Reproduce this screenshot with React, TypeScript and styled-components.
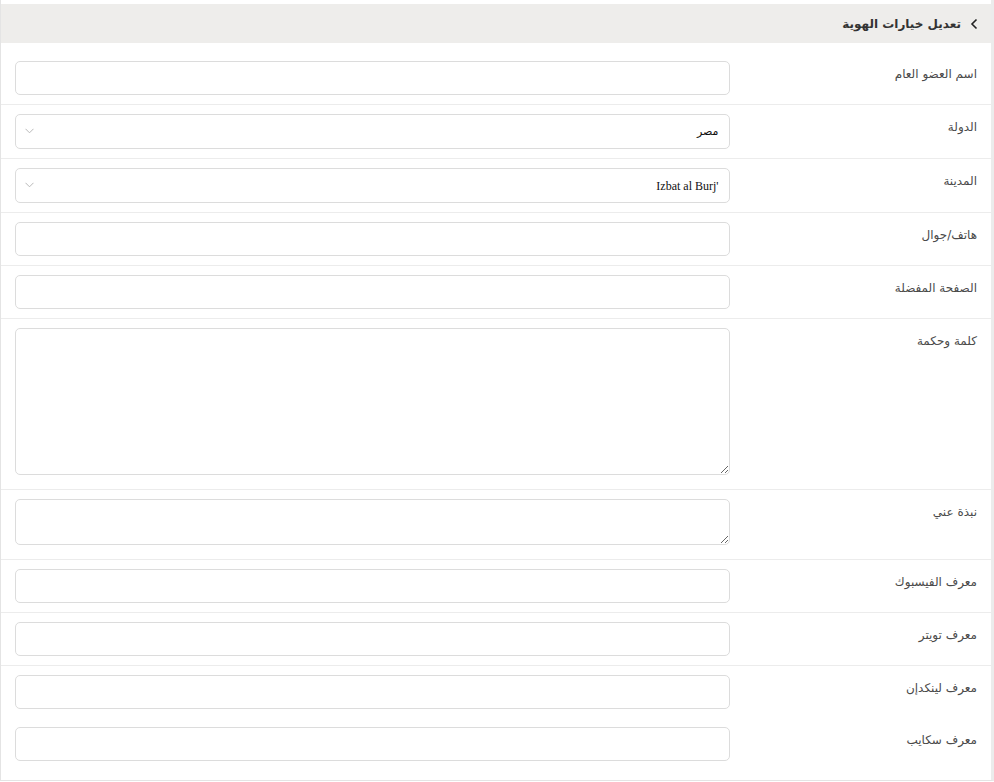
import React from 'react'
import styled, { createGlobalStyle } from 'styled-components'

const GlobalStyle = createGlobalStyle`
  html, body {
    margin: 0;
    padding: 0;
    background: #fff;
  }
  body {
    font-family: "DejaVu Sans", "Liberation Sans", sans-serif;
  }
  * {
    box-sizing: border-box;
  }
`

const Panel = styled.div`
  width: 994px;
  padding-top: 4px;
  padding-bottom: 10px;
  border-left: 1px solid #e4e4e4;
  border-right: 3px solid #ececec;
  border-bottom: 1px solid #e4e4e4;
  direction: rtl;
`

const Header = styled.div`
  height: 39px;
  background: #eeedeb;
  display: flex;
  align-items: center;
  gap: 9px;
  padding-right: 13px;
  margin-bottom: 9px;
`

const Title = styled.h3`
  margin: 0;
  font-size: 12px;
  font-weight: bold;
  color: #333;
`

const Row = styled.div<{ $plain?: boolean }>`
  display: flex;
  flex-direction: row;
  padding: 9px 0;
  border-bottom: ${p => (p.$plain ? 'none' : '1px solid #ececec')};
`

const Label = styled.label`
  width: 25%;
  padding: 3px 14px 0;
  font-size: 12px;
  line-height: 20px;
  color: #4a4a4a;
  text-align: right;
`

const Field = styled.div`
  width: 75%;
  padding: 0 14px;
  position: relative;
`

const TextInput = styled.input`
  display: block;
  width: 100%;
  height: 34px;
  border: 1px solid #dcdcdc;
  border-radius: 5px;
  background: #fff;
  outline: none;
  padding: 0 10px;
`

const Select = styled.select<{ $latin?: boolean }>`
  display: block;
  width: 100%;
  height: 35px;
  border: 1px solid #dcdcdc;
  border-radius: 5px;
  background: #fff;
  appearance: none;
  outline: none;
  padding: 0 10px;
  color: #111;
  font-family: ${p => (p.$latin ? '"Liberation Serif", serif' : '"DejaVu Sans", sans-serif')};
  font-size: ${p => (p.$latin ? '12px' : '11px')};
`

const Caret = styled.svg`
  position: absolute;
  left: 24px;
  top: 14px;
  pointer-events: none;
`

const TextArea = styled.textarea<{ $tall?: boolean }>`
  display: block;
  width: 100%;
  height: ${p => (p.$tall ? '147px' : '46px')};
  margin-bottom: 5px;
  border: 1px solid #dcdcdc;
  border-radius: 5px;
  background: #fff;
  outline: none;
  padding: 6px 10px;
  direction: ltr;
`

const Chevron = () => (
  <svg width="8" height="12" viewBox="0 0 8 12">
    <path d="M6.5 1.5 L2 6 L6.5 10.5" fill="none" stroke="#222" strokeWidth="1.6" />
  </svg>
)

const SelectField = ({ value, latin }: { value: string; latin?: boolean }) => (
  <Field>
    <Select $latin={latin} defaultValue={value}>
      <option value={value}>{value}</option>
    </Select>
    <Caret width="9" height="6" viewBox="0 0 9 6">
      <path d="M0.5 0.8 L4.5 4.8 L8.5 0.8" fill="none" stroke="#b8b8b8" strokeWidth="1" />
    </Caret>
  </Field>
)

const App: React.FC = () => {
  return (
    <Panel>
      <GlobalStyle />
      <Header>
        <Chevron />
        <Title>تعديل خيارات الهوية</Title>
      </Header>

      <Row>
        <Label>اسم العضو العام</Label>
        <Field><TextInput type="text" /></Field>
      </Row>
      <Row>
        <Label>الدولة</Label>
        <SelectField value="مصر" />
      </Row>
      <Row>
        <Label>المدينة</Label>
        <SelectField value={"Izbat al Burj'\u200E"} latin />
      </Row>
      <Row>
        <Label>هاتف/جوال</Label>
        <Field><TextInput type="text" /></Field>
      </Row>
      <Row>
        <Label>الصفحة المفضلة</Label>
        <Field><TextInput type="text" /></Field>
      </Row>
      <Row>
        <Label>كلمة وحكمة</Label>
        <Field><TextArea $tall /></Field>
      </Row>
      <Row>
        <Label>نبذة عني</Label>
        <Field><TextArea /></Field>
      </Row>
      <Row>
        <Label>معرف الفيسبوك</Label>
        <Field><TextInput type="text" /></Field>
      </Row>
      <Row>
        <Label>معرف تويتر</Label>
        <Field><TextInput type="text" /></Field>
      </Row>
      <Row $plain>
        <Label>معرف لينكدإن</Label>
        <Field><TextInput type="text" /></Field>
      </Row>
      <Row $plain>
        <Label>معرف سكايب</Label>
        <Field><TextInput type="text" /></Field>
      </Row>
    </Panel>
  )
}

export default App
